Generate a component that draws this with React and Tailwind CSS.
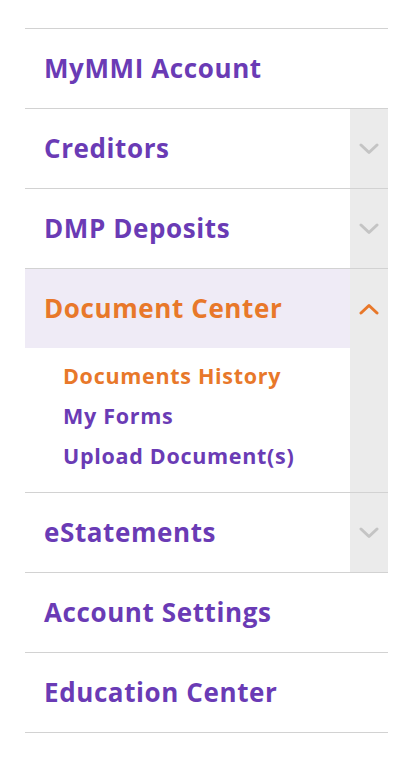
import { useState } from "react";

function Chevron({ up, color }) {
  return (
    <svg width="20" height="12" viewBox="0 0 20 12" fill="none">
      <path
        d={up ? "M2 10L10 2.5L18 10" : "M2 2L10 9.5L18 2"}
        stroke={color}
        strokeWidth="3"
        strokeLinecap="round"
        strokeLinejoin="round"
      />
    </svg>
  );
}

function Row({ label, expandable }) {
  return (
    <div className="flex h-[80px] border-t border-[#d2d2d2]">
      <div className="flex flex-1 items-center pl-[19px] text-[26px] font-bold tracking-[0.6px] text-[#6a3bb5]">
        {label}
      </div>
      {expandable && (
        <div className="flex w-[38px] items-center justify-center bg-[#ebebeb]">
          <Chevron color="#c4c4c4" />
        </div>
      )}
    </div>
  );
}

export default function App() {
  const [open] = useState(true);
  return (
    <div className="min-h-screen bg-white pt-[28px] px-[25px] pr-[29px]" style={{ fontFamily: "'Open Sans', sans-serif" }}>
      <nav className="border-b border-[#d2d2d2]">
        <Row label="MyMMI Account" />
        <Row label="Creditors" expandable />
        <Row label="DMP Deposits" expandable />

        <div className="border-t border-[#d2d2d2]">
          <div className="flex h-[79px]">
            <div className="flex flex-1 items-center bg-[#efebf6] pl-[19px] text-[26px] font-bold tracking-[0.6px] text-[#e8782a]">
              Document Center
            </div>
            <div className="flex w-[38px] items-center justify-center bg-[#ebebeb]">
              <Chevron up color="#e8782a" />
            </div>
          </div>
          {open && (
            <div className="flex">
              <ul className="flex-1 pl-[38px] pt-[8px] pb-[16px] text-[21.5px] font-bold leading-[40px] tracking-[0.7px]">
                <li className="text-[#e8782a]">Documents History</li>
                <li className="text-[#6a3bb5]">My Forms</li>
                <li className="text-[#6a3bb5]">Upload Document(s)</li>
              </ul>
              <div className="w-[38px] bg-[#ebebeb]" />
            </div>
          )}
        </div>

        <Row label="eStatements" expandable />
        <Row label="Account Settings" />
        <Row label="Education Center" />
      </nav>
    </div>
  );
}
